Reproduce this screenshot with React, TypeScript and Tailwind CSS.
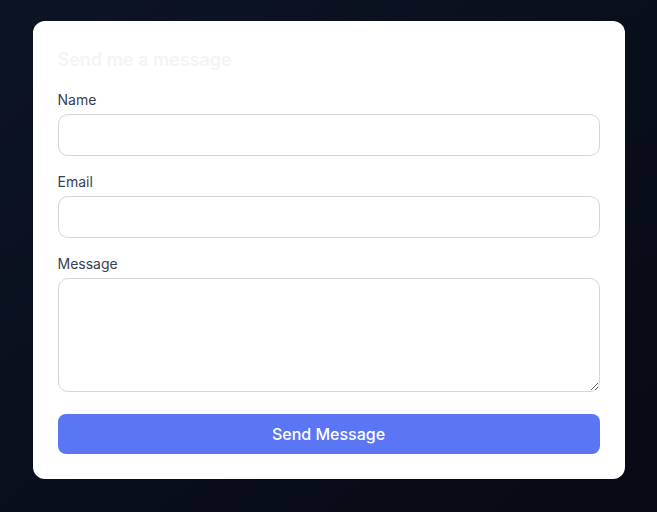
export default function App() {
  return (
    <div
      className="min-h-[512px] w-full bg-gradient-to-br from-[#0d1424] to-[#060a14] pt-[21px] pb-[33px]"
      style={{ fontFamily: "Inter, 'Noto Sans', sans-serif" }}
    >
      <div className="mx-auto w-[592px] rounded-xl bg-white p-[25px]">
        <h2 className="mb-4 text-lg font-semibold leading-7 text-gray-100">Send me a message</h2>

        <div className="mb-4">
          <label className="mb-1 block text-sm font-normal leading-5 text-gray-700">Name</label>
          <input
            type="text"
            className="block h-[42px] w-full rounded-[10px] border border-gray-300 px-3 text-sm outline-none"
          />
        </div>

        <div className="mb-4">
          <label className="mb-1 block text-sm font-normal leading-5 text-gray-700">Email</label>
          <input
            type="email"
            className="block h-[42px] w-full rounded-[10px] border border-gray-300 px-3 text-sm outline-none"
          />
        </div>

        <div className="mb-[22px]">
          <label className="mb-1 block text-sm font-normal leading-5 text-gray-700">Message</label>
          <textarea className="block h-[114px] w-full rounded-[10px] border border-gray-300 px-3 py-2 text-sm outline-none" />
        </div>

        <button className="flex h-10 w-full items-center justify-center rounded-lg bg-[#5a76f5] text-base font-medium text-white">
          Send Message
        </button>
      </div>
    </div>
  );
}
